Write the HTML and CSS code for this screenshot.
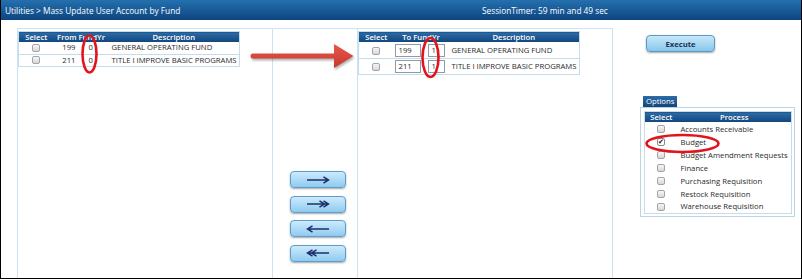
FILE: index.html
```html
<!DOCTYPE html>
<html>
<head>
<meta charset="utf-8">
<link rel="stylesheet" href="styles.css">
</head>
<body>
<div class="frame">
  <div class="topbar">
    <span class="crumb">Utilities &gt; Mass Update User Account by Fund</span>
    <span class="timer">SessionTimer: 59 min and 49 sec</span>
  </div>
  <div class="main">
    <div class="lists">
      <div class="panel">
        <table class="grid from">
          <colgroup><col class="c-sel"><col class="c-fund"><col class="c-yr"><col class="c-desc"></colgroup>
          <tr><th>Select</th><th colspan="2">From FundYr</th><th>Description</th></tr>
          <tr><td class="sel"><span class="cb"></span></td><td class="fund">199</td><td class="yr">0</td><td class="desc">GENERAL OPERATING FUND</td></tr>
          <tr><td class="sel"><span class="cb"></span></td><td class="fund">211</td><td class="yr">0</td><td class="desc">TITLE I IMPROVE BASIC PROGRAMS</td></tr>
        </table>
      </div>
      <div class="mover">
        <button class="mv" type="button"><svg width="24" height="10" viewBox="0 0 24 10"><path d="M1 5H22.5M17.5 1.8L22.5 5L17.5 8.2"/></svg></button>
        <button class="mv" type="button"><svg width="24" height="10" viewBox="0 0 24 10"><path d="M1 5H22.5M13.5 1.8L18.5 5L13.5 8.2M17.5 1.8L22.5 5L17.5 8.2"/></svg></button>
        <button class="mv" type="button"><svg width="24" height="10" viewBox="0 0 24 10"><path d="M23 5H1.5M6.5 1.8L1.5 5L6.5 8.2"/></svg></button>
        <button class="mv" type="button"><svg width="24" height="10" viewBox="0 0 24 10"><path d="M23 5H1.5M10.5 1.8L5.5 5L10.5 8.2M6.5 1.8L1.5 5L6.5 8.2"/></svg></button>
      </div>
      <div class="panel">
        <table class="grid to">
          <colgroup><col class="c-sel"><col class="c-fund2"><col class="c-yr2"><col class="c-desc"></colgroup>
          <tr><th>Select</th><th colspan="2">To FundYr</th><th>Description</th></tr>
          <tr><td class="sel"><span class="cb"></span></td><td class="fund2"><span class="inp w-fund">199</span></td><td class="yr2"><span class="inp w-yr">1</span></td><td class="desc">GENERAL OPERATING FUND</td></tr>
          <tr><td class="sel"><span class="cb"></span></td><td class="fund2"><span class="inp w-fund">211</span></td><td class="yr2"><span class="inp w-yr">1</span></td><td class="desc">TITLE I IMPROVE BASIC PROGRAMS</td></tr>
        </table>
      </div>
    </div>
    <div class="side">
      <button class="exec" type="button">Execute</button>
      <div class="tab">Options</div>
      <div class="optbox">
        <table class="grid opts">
          <colgroup><col class="c-osel"><col class="c-proc"></colgroup>
          <tr><th>Select</th><th>Process</th></tr>
          <tr><td class="sel"><span class="cb"></span></td><td class="proc">Accounts Receivable</td></tr>
          <tr><td class="sel"><span class="cb on">&#10004;</span></td><td class="proc">Budget</td></tr>
          <tr><td class="sel"><span class="cb"></span></td><td class="proc">Budget Amendment Requests</td></tr>
          <tr><td class="sel"><span class="cb"></span></td><td class="proc">Finance</td></tr>
          <tr><td class="sel"><span class="cb"></span></td><td class="proc">Purchasing Requisition</td></tr>
          <tr><td class="sel"><span class="cb"></span></td><td class="proc">Restock Requisition</td></tr>
          <tr><td class="sel"><span class="cb"></span></td><td class="proc">Warehouse Requisition</td></tr>
        </table>
      </div>
    </div>
  </div>
  <svg class="marks" width="802" height="279" viewBox="0 0 802 279">
    <defs>
      <linearGradient id="rg" x1="0" y1="0" x2="0" y2="1">
        <stop offset="0" stop-color="#e6594d"/>
        <stop offset="1" stop-color="#c8362c"/>
      </linearGradient>
    </defs>
    <g class="arrow">
      <path d="M253 53.5H334V44L353.5 56L334 68V58.5H253A2.5 2.5 0 0 1 253 53.5Z" fill="url(#rg)"/>
    </g>
    <ellipse cx="89.5" cy="54" rx="7" ry="18.5" fill="none" stroke="#e3131b" stroke-width="2.6"/>
    <ellipse cx="430.5" cy="57.5" rx="8" ry="19.5" fill="none" stroke="#e3131b" stroke-width="2.6"/>
    <ellipse cx="682.5" cy="143.5" rx="36" ry="8.5" fill="none" stroke="#e3131b" stroke-width="2.6"/>
  </svg>
</div>
</body>
</html>
```

FILE: styles.css
```css
* { box-sizing: border-box; }
html, body { margin: 0; padding: 0; background: #fff; }
body { font-family: "Open Sans", "Liberation Sans", sans-serif; }

.frame {
  width: 802px;
  height: 279px;
  border: 1px solid #000;
  border-top: 0;
  position: relative;
  overflow: hidden;
  display: flex;
  flex-direction: column;
}

.topbar {
  height: 20px;
  flex: 0 0 20px;
  background: linear-gradient(#2470ae, #0d4580);
  color: #fff;
  font-size: 8.3px;
  display: flex;
  align-items: center;
  padding-left: 4px;
}
.crumb { width: 477px; }

.main {
  flex: 1;
  display: flex;
  margin-top: 8px;
  padding-left: 16px;
}

.lists {
  width: 596px;
  display: flex;
  border-top: 1px solid #cde3ef;
}
.panel {
  width: 256px;
  border-left: 1px solid #cde3ef;
  border-right: 1px solid #cde3ef;
  padding-top: 2px;
}
.mover {
  flex: 1;
  display: flex;
  flex-direction: column;
  gap: 7.5px;
  padding-top: 142px;
  padding-left: 17px;
}
.mv {
  width: 56px;
  height: 17px;
  padding: 0;
  border: 1px solid #5d9ccb;
  border-radius: 4px;
  background: linear-gradient(#cdeafb, #8fcbef);
  box-shadow: 0 1px 2px rgba(0,0,0,0.35);
  display: flex;
  align-items: center;
  justify-content: center;
}
.mv svg path { fill: none; stroke: #1c2f6e; stroke-width: 1.5; }

.grid {
  border-collapse: collapse;
  border: 1px solid #c6dceb;
  font-size: 7.7px;
  color: #2a2a2a;
  table-layout: fixed;
}
.grid th {
  background: linear-gradient(#2c6ca8, #12457b);
  color: #fff;
  font-weight: 600;
  height: 10px;
  line-height: 10px;
  padding: 0;
  text-align: center;
}
.grid td {
  padding: 0;
  border-bottom: 1px solid #c6dceb;
  white-space: nowrap;
}
.from, .to { width: 221px; }
.from td { height: 12px; line-height: 11px; }
.to td { height: 16px; line-height: 14px; }
.c-sel { width: 35px; }
.c-fund { width: 25px; }
.c-yr { width: 30px; }
.c-fund2 { width: 30px; }
.c-yr2 { width: 25px; }
.c-desc { width: 131px; }
.sel { text-align: center; }
.fund { text-align: right; padding-right: 3px !important; }
.yr { padding-left: 10px !important; }
.desc { padding-left: 3px !important; }
.fund2 { padding-left: 1px !important; }
.yr2 { padding-left: 4px !important; }

.cb {
  display: inline-block;
  width: 8px;
  height: 8px;
  border: 1px solid #a4a4a4;
  border-radius: 2px;
  background: linear-gradient(#f7f7f7, #d6d6d6);
  vertical-align: middle;
  font-size: 7px;
  line-height: 6px;
  color: #111;
  text-align: center;
}
.cb.on { background: #fff; border-color: #8a8a8a; }

.inp {
  display: inline-block;
  height: 13px;
  line-height: 11px;
  border: 1px solid #8c9cab;
  background: #fff;
  padding-left: 3px;
  vertical-align: middle;
  font-size: 7.7px;
  color: #2a2a2a;
}
.w-fund { width: 26px; }
.w-yr { width: 17px; }

.side {
  flex: 1;
  display: flex;
  flex-direction: column;
  align-items: flex-start;
  padding-left: 27px;
}
.exec {
  margin-top: 7px;
  margin-left: 6px;
  width: 69px;
  height: 17px;
  padding: 0;
  border: 1px solid #5a98c7;
  border-radius: 4px;
  background: linear-gradient(#c9e8fa, #86c6ec);
  box-shadow: 0 1px 2px rgba(0,0,0,0.35);
  font-family: "Open Sans", "Liberation Sans", sans-serif;
  font-size: 7.7px;
  font-weight: 700;
  color: #1b3556;
}
.tab {
  margin-top: 44px;
  margin-left: 3px;
  height: 11px;
  line-height: 11px;
  padding: 0 3px;
  background: linear-gradient(#2c6ca8, #12457b);
  color: #fff;
  font-size: 7.7px;
}
.optbox {
  width: 155px;
  height: 110px;
  border: 1px solid #bcd3e3;
  padding: 3px 0 0 3px;
}
.opts { width: 147px; }
.opts td { height: 13px; line-height: 12px; border-bottom: 0; }
.c-osel { width: 33px; }
.c-proc { width: 114px; }
.proc { padding-left: 3px !important; }

.marks {
  position: absolute;
  left: -1px;
  top: 0;
  pointer-events: none;
}
.arrow { filter: drop-shadow(1px 2px 1px rgba(0,0,0,0.3)); }
```
